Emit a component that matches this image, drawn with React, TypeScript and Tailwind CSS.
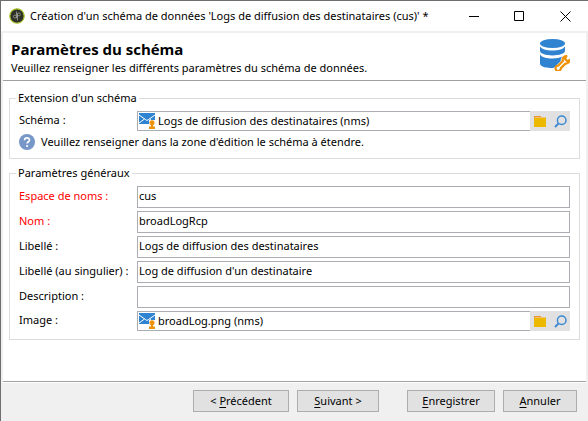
import { useState } from 'react';
import type { ReactNode } from 'react';

function AppLogo() {
  return (
    <svg viewBox="0 0 16 16" className="h-4 w-4 shrink-0" aria-hidden="true">
      <circle cx="8" cy="8" r="7.2" fill="#2f3129" stroke="#a9c52f" strokeWidth="1.2" />
      <circle cx="5.900" cy="8.600" r="1.500" fill="none" stroke="#8d8d84" strokeWidth="0.900" />
      <circle cx="9.900" cy="6.400" r="1.500" fill="none" stroke="#8d8d84" strokeWidth="0.900" />
      <path d="M7.500 3.500v6.800M8.500 5.500v7" fill="none" stroke="#a3a39a" strokeWidth="0.800" />
    </svg>
  );
}

function DatabaseIcon() {
  return (
    <svg viewBox="0 0 30 32" className="h-8 w-[30px] shrink-0" aria-hidden="true">
      <g fill="#2f83d1">
        <ellipse cx="12.500" cy="4.500" rx="12.500" ry="4.500" />
        <path d="M0 7.200c1.500 2.900 6.500 4.400 12.500 4.400S23.500 10.100 25 7.200v4.600c0 2.700-5.600 4.700-12.500 4.700S0 14.500 0 11.800z" />
        <path d="M0 15.200c1.500 2.900 6.500 4.400 12.500 4.400 3.900 0 7.400-.7 9.900-2-1.400 1.300-1.900 2.800-1.600 4.400L14 28.800C6.500 29.600 0 27.800 0 24.600z" />
      </g>
      <path
        d="M26.400 17a3.600 3.600 0 0 0-3.500 5l-4.500 4.600a2.700 2.700 0 1 0 2.500 2.500l4.500-4.500a3.600 3.600 0 0 0 4.100-3.500l-2.200 1.100-2.300-2.300z"
        fill="#fff"
        stroke="#ee9209"
        strokeWidth="2.200"
        strokeLinejoin="round"
      />
    </svg>
  );
}

function MailIcon() {
  return (
    <svg viewBox="0 0 17 16" className="h-4 w-[17px] shrink-0" aria-hidden="true">
      <path d="M1 0h16v11H1z" fill="#2f83d1" />
      <path d="M1 2l6.500 4.500 1.500 1 1.500-1L17 2M1 10l5.500-4M17 10l-5.500-4" fill="none" stroke="#fff" strokeWidth="1" />
      <path d="M11 7h6v9h-6z" fill="#fff" />
      <circle cx="14" cy="9.800" r="2.500" fill="#ee9209" />
      <path d="M13 11h2v2.400h2V16h-6v-2.600h2z" fill="#ee9209" />
    </svg>
  );
}

function FolderIcon() {
  return (
    <svg viewBox="0 0 12 11" className="h-[11px] w-3" aria-hidden="true">
      <path d="M0 0h7v3H0z" fill="#e8952f" />
      <path d="M1 1h11v2H1z" fill="#efc37c" />
      <path d="M0 2h12v9H0z" fill="#edb900" />
    </svg>
  );
}

function SearchIcon() {
  return (
    <svg viewBox="0 0 13 13" className="h-[13px] w-[13px]" aria-hidden="true">
      <circle cx="7.700" cy="5.200" r="4.300" fill="none" stroke="#3b8ad2" strokeWidth="1.500" />
      <path d="M4.500 8.400L1 12" stroke="#3b8ad2" strokeWidth="2" />
    </svg>
  );
}

function HelpIcon() {
  return (
    <svg viewBox="0 0 16 16" className="h-4 w-4 shrink-0" aria-hidden="true">
      <circle cx="8" cy="8" r="8" fill="#7697c7" />
      <path d="M5.600 6.200c0-3 4.900-3 4.900-.2 0 1.700-2.400 1.800-2.400 3.600" fill="none" stroke="#fff" strokeWidth="1.700" />
      <circle cx="8.100" cy="12" r="1.100" fill="#fff" />
    </svg>
  );
}

function Group({ title, className, children }: { title: string; className: string; children: ReactNode }) {
  return (
    <fieldset className={`min-w-0 border border-[#dcdcdc] px-[9px] pt-[5px] ${className}`}>
      <legend className="-ml-[3px] h-4 px-0.5 leading-4">{title}</legend>
      {children}
    </fieldset>
  );
}

type FieldProps = { id: string; label: string; initial: string; required?: boolean };

function TextField({ id, label, initial, required = false }: FieldProps) {
  const [value, setValue] = useState(initial);
  return (
    <div className="flex h-[22px] items-stretch">
      <label htmlFor={id} className={`w-[118px] shrink-0 whitespace-nowrap leading-5 ${required ? 'text-[#ff0000]' : ''}`}>
        {label}
      </label>
      <input
        id={id}
        value={value}
        onChange={(e) => setValue(e.target.value)}
        className="min-w-0 flex-1 border border-[#abadb3] bg-white px-px pb-0.5 outline-none"
      />
    </div>
  );
}

function PickerField({ id, label, initial }: FieldProps) {
  const [value, setValue] = useState(initial);
  return (
    <div className="flex h-5">
      <label htmlFor={id} className="w-[118px] shrink-0 whitespace-nowrap leading-[18px]">
        {label}
      </label>
      <div className="flex min-w-0 flex-1 items-center border border-r-0 border-[#abadb3] bg-white">
        <MailIcon />
        <input
          id={id}
          value={value}
          onChange={(e) => setValue(e.target.value)}
          className="h-[18px] min-w-0 flex-1 bg-transparent pb-0.5 pl-[3px] outline-none"
        />
      </div>
      <button type="button" aria-label="Parcourir" className="flex w-5 items-center justify-center bg-[#e1e1e1]">
        <FolderIcon />
      </button>
      <button type="button" aria-label="Rechercher" className="flex w-5 items-center justify-center bg-[#e1e1e1]">
        <SearchIcon />
      </button>
    </div>
  );
}

function FooterButton({ className, children }: { className: string; children: ReactNode }) {
  return (
    <button type="button" className={`h-[22px] whitespace-nowrap border border-[#adadad] bg-[#e1e1e1] pb-px leading-5 ${className}`}>
      {children}
    </button>
  );
}

export default function App() {
  return (
    <div className="flex min-h-screen flex-col border-l border-t border-[#6e6e70] bg-white font-['Noto_Sans','Open_Sans',sans-serif] text-[11px] leading-4 text-black">
      <div className="flex h-[30px] shrink-0 items-center pl-2">
        <AppLogo />
        <span className="min-w-0 flex-1 truncate pl-[5px]">Création d'un schéma de données 'Logs de diffusion des destinataires (cus)' *</span>
        <button type="button" aria-label="Réduire" className="flex h-full w-[45px] items-center justify-center">
          <svg viewBox="0 0 11 11" className="h-[11px] w-[11px]"><path d="M0 5.500h10" stroke="#000" /></svg>
        </button>
        <button type="button" aria-label="Agrandir" className="flex h-full w-[45px] items-center justify-center">
          <svg viewBox="0 0 11 11" className="h-[11px] w-[11px]"><path d="M.5.500h9v9h-9z" fill="none" stroke="#000" /></svg>
        </button>
        <button type="button" aria-label="Fermer" className="flex h-full w-[46px] items-center justify-center">
          <svg viewBox="0 0 11 11" className="h-[11px] w-[11px]"><path d="M.5.500l10 10M10.500.500l-10 10" stroke="#000" /></svg>
        </button>
      </div>

      <form className="flex flex-1 flex-col border-x-2 border-t-2 border-[#f0f0f0]" onSubmit={(e) => e.preventDefault()}>
        <header className="flex h-12 shrink-0 items-start justify-between border-b border-[#a0a0a0] pl-2 pr-4 pt-1.5">
          <div>
            <h1 className="font-['Open_Sans',sans-serif] text-[15px] font-bold leading-5">Paramètres du schéma</h1>
            <p className="leading-[18px]">Veuillez renseigner les différents paramètres du schéma de données.</p>
          </div>
          <DatabaseIcon />
        </header>

        <main className="flex flex-1 flex-col gap-1.5 px-1.5 pb-6 pt-[9px]">
          <Group title="Extension d'un schéma" className="pb-[5px]">
            <PickerField id="schema" label="Schéma :" initial="Logs de diffusion des destinataires (nms)" />
            <div className="flex h-[22px] items-center gap-1.5">
              <HelpIcon />
              <p>Veuillez renseigner dans la zone d'édition le schéma à étendre.</p>
            </div>
          </Group>

          <Group title="Paramètres généraux" className="pb-2">
            <div className="flex flex-col gap-[3px]">
              <TextField id="namespace" label="Espace de noms :" initial="cus" required />
              <TextField id="name" label="Nom :" initial="broadLogRcp" required />
              <TextField id="label" label="Libellé :" initial="Logs de diffusion des destinataires" />
              <TextField id="singular" label="Libellé (au singulier) :" initial="Log de diffusion d'un destinataire" />
              <TextField id="description" label="Description :" initial="" />
              <PickerField id="image" label="Image :" initial="broadLog.png (nms)" />
            </div>
          </Group>
        </main>

        <div className="border-t border-[#a0a0a0]">
          <footer className="flex justify-end border-t border-white bg-[#f0f0f0] pb-[9px] pr-[9px] pt-[7px]">
            <FooterButton className="mr-2 w-24">
              &lt; <u className="underline-offset-2">P</u>récédent
            </FooterButton>
            <FooterButton className="mr-7 w-[82px]">
              <u className="underline-offset-2">S</u>uivant &gt;
            </FooterButton>
            <FooterButton className="mr-2 w-[88px]">
              <u className="underline-offset-2">E</u>nregistrer
            </FooterButton>
            <FooterButton className="w-[74px]">
              <u className="underline-offset-2">A</u>nnuler
            </FooterButton>
          </footer>
        </div>
      </form>
    </div>
  );
}
